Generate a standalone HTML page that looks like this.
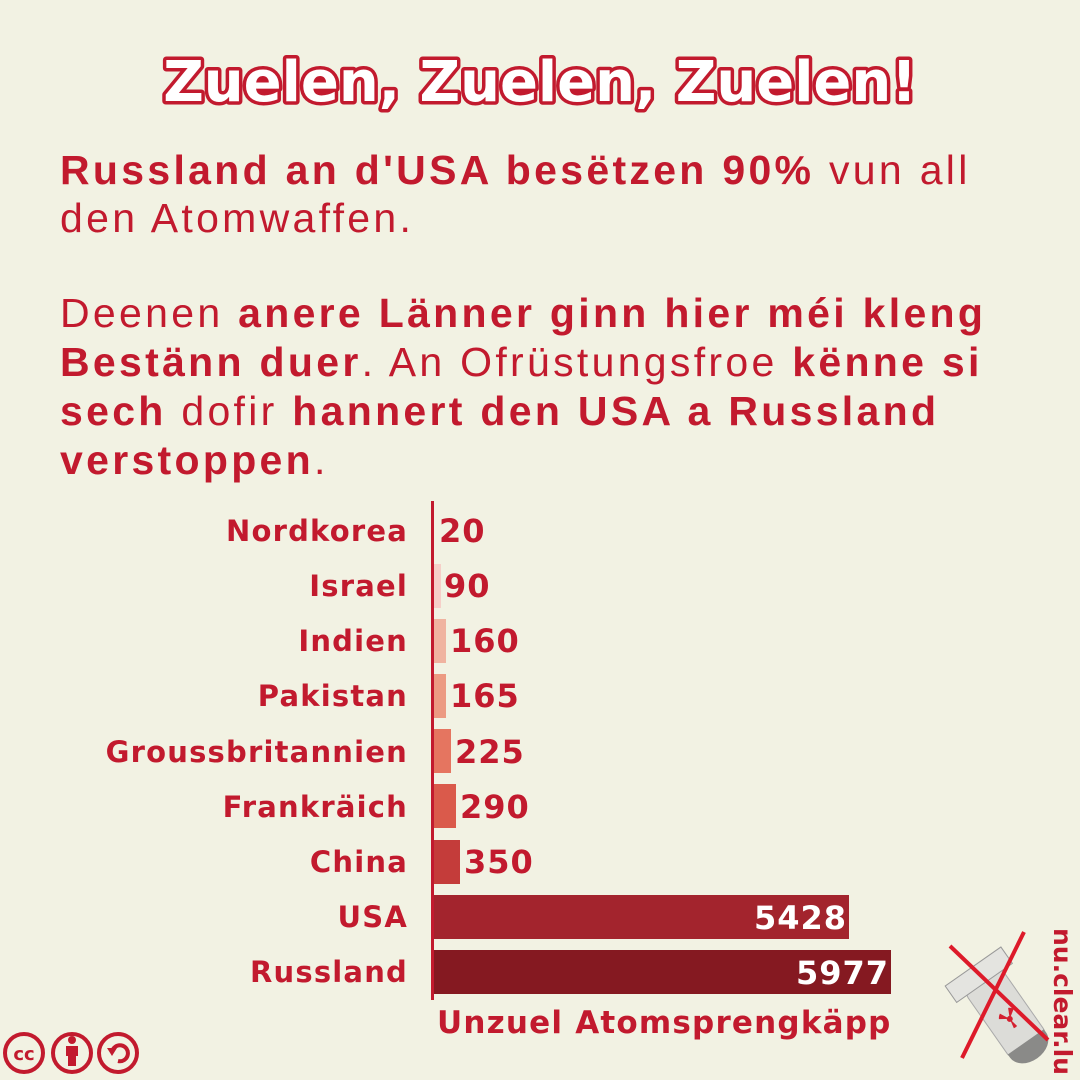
<!DOCTYPE html>
<html><head><meta charset="utf-8"><style>
html,body{margin:0;padding:0;background:#f2f2e3;}
body{width:1080px;height:1080px;position:relative;overflow:hidden;font-family:"Liberation Sans",sans-serif;color:#c21a2e;}
.p{position:absolute;left:60px;width:1020px;font-size:41px;line-height:48px;letter-spacing:3.3px;white-space:nowrap;}
b{font-weight:bold;}
</style></head><body>
<svg width="1080" height="1080" style="position:absolute;left:0;top:0">
<text x="540" y="101" text-anchor="middle" font-family="DejaVu Sans, sans-serif" font-weight="bold" font-size="56" fill="#fff" stroke="#c21a2e" stroke-width="7" paint-order="stroke" stroke-linejoin="round" letter-spacing="0">Zuelen, Zuelen, Zuelen!</text>
<g font-family="DejaVu Sans, sans-serif" font-weight="bold" font-size="29" fill="#c21a2e" text-anchor="end" letter-spacing="1.2">
<text x="408" y="541">Nordkorea</text>
<text x="408" y="596">Israel</text>
<text x="408" y="651">Indien</text>
<text x="408" y="706">Pakistan</text>
<text x="408" y="762">Groussbritannien</text>
<text x="408" y="817">Frankräich</text>
<text x="408" y="872">China</text>
<text x="408" y="927">USA</text>
<text x="408" y="982">Russland</text>
</g>
<rect x="431" y="501" width="3" height="499" fill="#c21a2e"/>
<rect x="434" y="564" width="7" height="44" fill="#f6cfc8"/>
<rect x="434" y="619" width="12" height="44" fill="#f0b3a0"/>
<rect x="434" y="674" width="12" height="44" fill="#ec9a82"/>
<rect x="434" y="729" width="17" height="44" fill="#e57560"/>
<rect x="434" y="784" width="22" height="44" fill="#da5a4b"/>
<rect x="434" y="840" width="26" height="44" fill="#c43c3a"/>
<rect x="434" y="895" width="415" height="44" fill="#a3242d"/>
<rect x="434" y="950" width="457" height="44" fill="#851921"/>
<g font-family="DejaVu Sans, sans-serif" font-weight="bold" font-size="32" fill="#c21a2e" letter-spacing="1">
<text x="439" y="542">20</text>
<text x="444" y="597">90</text>
<text x="450" y="652">160</text>
<text x="450" y="707">165</text>
<text x="455" y="763">225</text>
<text x="460" y="818">290</text>
<text x="464" y="873">350</text>
<text x="847" y="929" text-anchor="end" fill="#fff">5428</text>
<text x="889" y="984" text-anchor="end" fill="#fff">5977</text>
<text x="437" y="1033" font-size="31" letter-spacing="1.2">Unzuel Atomsprengkäpp</text>
</g>
<g fill="none" stroke="#c21a2e" stroke-width="4">
<circle cx="24" cy="1053" r="19"/><circle cx="72" cy="1053" r="19"/><circle cx="118" cy="1053" r="19"/>
</g>
<text x="24" y="1060" text-anchor="middle" font-family="DejaVu Sans" font-weight="bold" font-size="18" fill="#c21a2e">cc</text>
<circle cx="72" cy="1040" r="4" fill="#c21a2e"/><rect x="66" y="1046" width="12" height="10" fill="#c21a2e"/><rect x="68" y="1054" width="8" height="12" fill="#c21a2e"/>
<path d="M112 1052 A8 8 0 1 1 118 1061" fill="none" stroke="#c21a2e" stroke-width="4"/><path d="M107 1048 L117 1048 L112 1056 Z" fill="#c21a2e"/>
<g transform="rotate(-35 1000 1005)">
<rect x="978" y="975" width="44" height="80" rx="6" fill="#dcdcd8" stroke="#aaa" stroke-width="1"/>
<path d="M978 1050 h44 v4 a22 16 0 0 1 -44 0z" fill="#8a8a88"/>
<rect x="966" y="958" width="68" height="20" fill="#e4e4e0" stroke="#999" stroke-width="1"/>
<circle cx="1000" cy="1022" r="3" fill="#d42030"/>
<path d="M1000 1022 l-9 -6 a10 10 0 0 1 4 -4z M1000 1022 l9 -6 a10 10 0 0 0 -4 -4z M1000 1022 l-2 10 a10 10 0 0 0 4 0z" fill="#d42030"/>
</g>
<path d="M950 946 L1048 1040" stroke="#dd1a2a" stroke-width="4" fill="none"/>
<path d="M1024 932 L962 1058" stroke="#dd1a2a" stroke-width="4" fill="none"/>
<text transform="translate(1054 928) rotate(90)" font-family="DejaVu Sans, sans-serif" font-weight="bold" font-size="25" fill="#c21a2e">nu.clear.lu</text>
</svg>
<div class="p" style="top:146px">
<b>Russland an d'USA besëtzen 90%</b> vun all<br>den Atomwaffen.</div>
<div class="p" style="top:289px;line-height:49px">
Deenen <b>anere Länner ginn hier méi kleng</b><br><b>Bestänn duer</b>. An Ofrüstungsfroe <b>kënne si</b><br><b>sech</b> dofir <b>hannert den USA a Russland</b><br><b>verstoppen</b>.</div>
</body></html>
